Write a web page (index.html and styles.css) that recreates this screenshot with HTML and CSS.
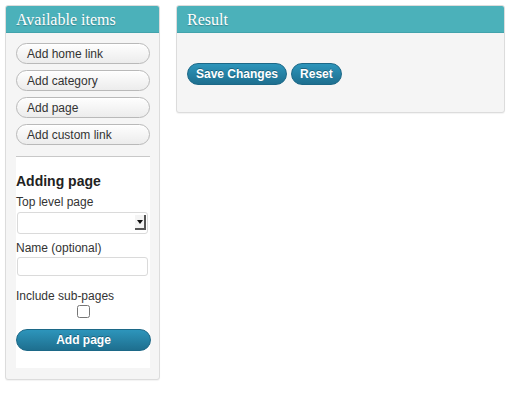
FILE: index.html
```html
<!DOCTYPE html>
<html lang="en">

<head>
    <meta charset="UTF-8">
    <meta name="viewport" content="width=device-width, initial-scale=1.0">
    <title>Menu builder</title>
    <link rel="stylesheet" href="styles.css">
</head>

<body>

    <div class="columnas">
        <div class="panel panel-items">
            <h3 class="panel-titulo">Available items</h3>
            <div class="panel-cuerpo">
                <button class="item">Add home link</button>
                <button class="item">Add category</button>
                <button class="item">Add page</button>
                <button class="item">Add custom link</button>

                <div class="formulario">
                    <h4>Adding page</h4>
                    <label class="etiqueta">Top level page</label>
                    <div class="selector">
                        <select></select>
                        <span class="flecha"></span>
                    </div>
                    <label class="etiqueta">Name (optional)</label>
                    <input type="text" class="campo">
                    <label class="etiqueta">Include sub-pages</label>
                    <div class="casilla"><input type="checkbox"></div>
                    <button class="boton-azul boton-ancho">Add page</button>
                </div>
            </div>
        </div>

        <div class="panel panel-resultado">
            <h3 class="panel-titulo">Result</h3>
            <div class="panel-cuerpo acciones">
                <button class="boton-azul">Save Changes</button>
                <button class="boton-azul">Reset</button>
            </div>
        </div>
    </div>

</body>

</html>
```

FILE: styles.css
```css
body {
    margin: 0;
    padding: 5px;
    font-family: "Liberation Sans", Arial, sans-serif;
    font-size: 12px;
    color: #333;
    background: #fff;
}

.columnas {
    display: flex;
    align-items: flex-start;
    gap: 16px;
}

.panel {
    background-color: #f5f5f5;
    border: 1px solid #dcdcdc;
    border-radius: 3px;
    box-shadow: 0 1px 1px rgba(0, 0, 0, 0.05);
}

.panel-items {
    width: 153px;
}

.panel-resultado {
    width: 328px;
}

.panel-titulo {
    margin: 0;
    height: 26px;
    line-height: 27px;
    padding: 0 10px;
    background-color: #4bb1ba;
    border-bottom: 1px solid #42a3ac;
    border-radius: 2px 2px 0 0;
    font-family: "Liberation Serif", Georgia, serif;
    font-size: 16px;
    font-weight: normal;
    color: #fff;
    text-shadow: 0 1px 1px rgba(0, 0, 0, 0.25);
}

.panel-cuerpo {
    padding: 10px 9px 11px 10px;
}

.item {
    display: block;
    width: 134px;
    height: 21px;
    margin-bottom: 6px;
    padding: 0 0 0 10px;
    text-align: left;
    font-family: inherit;
    font-size: 12px;
    color: #333;
    background: linear-gradient(#fefefe, #ececec);
    border: 1px solid #b9b9b9;
    border-radius: 11px;
    box-shadow: inset 0 1px 0 #fff;
}

.formulario {
    margin-top: 11px;
    border-top: 1px solid #c8c8c8;
    background-color: #fff;
    width: 134px;
    height: 211px;
    display: flex;
    flex-direction: column;
}

.formulario h4 {
    margin: 16px 0 5px 0;
    font-size: 14px;
    font-weight: bold;
    color: #222;
}

.etiqueta {
    display: block;
    line-height: 16px;
}

.selector {
    position: relative;
    width: 131px;
    height: 22px;
    margin: 2px 0 6px 1px;
}

.selector select {
    width: 100%;
    height: 100%;
    appearance: none;
    border: 1px solid #dadada;
    border-radius: 3px;
    background: #fff;
}

.flecha {
    position: absolute;
    right: 2px;
    top: 3px;
    width: 11px;
    height: 15px;
    background: #f4f4f4;
    border-right: 2px solid #555;
    border-bottom: 2px solid #555;
    box-sizing: border-box;
}

.flecha::after {
    content: "";
    position: absolute;
    left: 2px;
    top: 5px;
    border-left: 3px solid transparent;
    border-right: 3px solid transparent;
    border-top: 4px solid #111;
}

.campo {
    width: 131px;
    height: 19px;
    margin: 1px 0 12px 1px;
    padding: 0;
    box-sizing: border-box;
    border: 1px solid #dadada;
    border-radius: 3px;
}

.casilla {
    display: flex;
    justify-content: center;
    margin: 1px 0 11px 0;
}

.casilla input {
    margin: 0;
    width: 13px;
    height: 13px;
}

.boton-azul {
    box-sizing: border-box;
    height: 22px;
    padding: 0 8px;
    font-family: inherit;
    font-size: 12px;
    font-weight: bold;
    color: #fff;
    text-shadow: 0 -1px 0 rgba(0, 0, 0, 0.3);
    background: linear-gradient(#2d95bb, #1e6f8f);
    border: 1px solid #1c6887;
    border-radius: 11px;
    cursor: pointer;
}

.boton-ancho {
    width: 135px;
}

.acciones {
    display: flex;
    gap: 4px;
    padding: 30px 10px 27px 10px;
}
```
